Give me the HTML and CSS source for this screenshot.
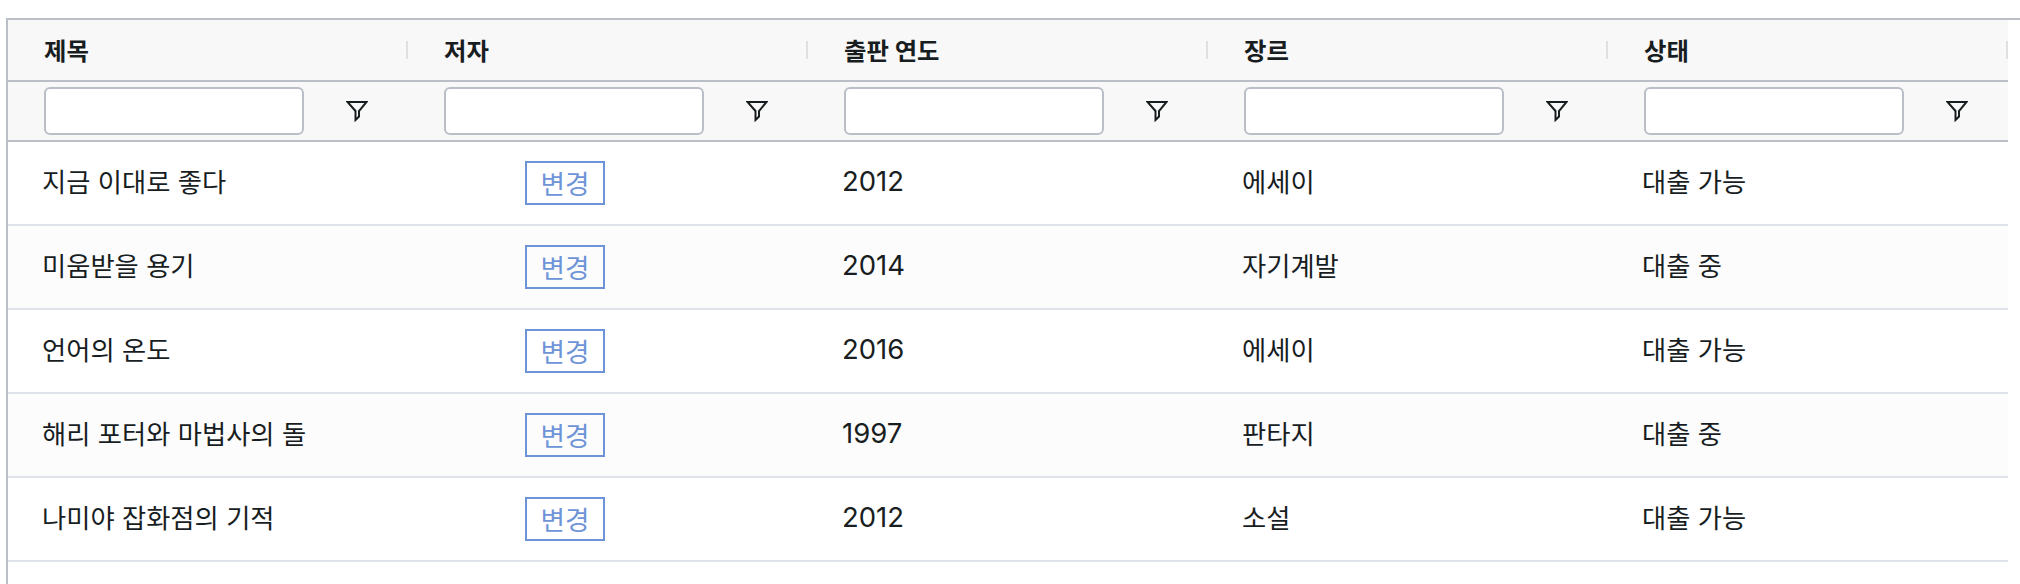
FILE: index.html
```html
<!DOCTYPE html>
<html lang="ko">
<head>
<meta charset="utf-8">
<title>도서 목록</title>
<link rel="stylesheet" href="styles.css">
</head>
<body>
<div class="grid">
  <div class="row head">
    <div class="hcell"><span>제목</span><i class="sep"></i></div>
    <div class="hcell"><span>저자</span><i class="sep"></i></div>
    <div class="hcell"><span>출판 연도</span><i class="sep"></i></div>
    <div class="hcell"><span>장르</span><i class="sep"></i></div>
    <div class="hcell"><span>상태</span><i class="sep"></i></div>
  </div>
  <div class="row filters">
    <div class="fcell"><input class="finput" type="text"><svg class="ficon" viewBox="0 0 22 22"><path d="M1.5 2H20.5L13 11V16.5L9.5 20V11Z"/></svg></div>
    <div class="fcell"><input class="finput" type="text"><svg class="ficon" viewBox="0 0 22 22"><path d="M1.5 2H20.5L13 11V16.5L9.5 20V11Z"/></svg></div>
    <div class="fcell"><input class="finput" type="text"><svg class="ficon" viewBox="0 0 22 22"><path d="M1.5 2H20.5L13 11V16.5L9.5 20V11Z"/></svg></div>
    <div class="fcell"><input class="finput" type="text"><svg class="ficon" viewBox="0 0 22 22"><path d="M1.5 2H20.5L13 11V16.5L9.5 20V11Z"/></svg></div>
    <div class="fcell"><input class="finput" type="text"><svg class="ficon" viewBox="0 0 22 22"><path d="M1.5 2H20.5L13 11V16.5L9.5 20V11Z"/></svg></div>
  </div>
  <div class="row body">
    <div class="cell">지금 이대로 좋다</div><div class="cell mid"><button class="btn">변경</button></div><div class="cell num">2012</div><div class="cell">에세이</div><div class="cell">대출 가능</div>
  </div>
  <div class="row body odd">
    <div class="cell">미움받을 용기</div><div class="cell mid"><button class="btn">변경</button></div><div class="cell num">2014</div><div class="cell">자기계발</div><div class="cell">대출 중</div>
  </div>
  <div class="row body">
    <div class="cell">언어의 온도</div><div class="cell mid"><button class="btn">변경</button></div><div class="cell num">2016</div><div class="cell">에세이</div><div class="cell">대출 가능</div>
  </div>
  <div class="row body odd">
    <div class="cell">해리 포터와 마법사의 돌</div><div class="cell mid"><button class="btn">변경</button></div><div class="cell num">1997</div><div class="cell">판타지</div><div class="cell">대출 중</div>
  </div>
  <div class="row body">
    <div class="cell">나미야 잡화점의 기적</div><div class="cell mid"><button class="btn">변경</button></div><div class="cell num">2012</div><div class="cell">소설</div><div class="cell">대출 가능</div>
  </div>
</div>
</body>
</html>
```
FILE: styles.css
```css
* { box-sizing: border-box; }
html, body { margin: 0; height: 100%; background: #fff; overflow: hidden; }
body {
  padding: 18px 0 0 6px;
  font-family: "Inter", "Noto Sans CJK KR", sans-serif;
  color: #181d1f;
}
.grid {
  height: 100%;
  border-top: 2px solid #babfc7;
  border-left: 2px solid #babfc7;
}
.row { display: grid; grid-template-columns: repeat(5, 400px); width: 2000px; }
.head {
  height: 62px;
  background: #f8f8f8;
  border-bottom: 2px solid #babfc7;
}
.hcell {
  display: flex;
  align-items: center;
  justify-content: space-between;
  padding: 0 0 2px 36px;
  font-size: 24.4px;
  font-weight: 700;
}
.sep { width: 2px; height: 18px; background: #dfe0e1; margin-top: 2px; }
.filters {
  height: 60px;
  background: #f8f8f8;
  border-bottom: 2px solid #babfc7;
}
.fcell {
  display: flex;
  align-items: center;
  padding-left: 36px;
}
.finput {
  width: 260px;
  height: 48px;
  background: #fff;
  border: 2px solid #babfc7;
  border-radius: 6px;
  padding: 0;
}
.ficon {
  width: 22px;
  height: 22px;
  margin-left: 42px;
  fill: none;
  stroke: #181d1f;
  stroke-width: 2;
}
.body {
  height: 84px;
  background: #fff;
  border-bottom: 2px solid #dde2eb;
}
.odd { background: #fcfcfc; }
.cell {
  display: flex;
  align-items: center;
  padding: 0 0 6px 34px;
  font-size: 26.3px;
}
.num { font-size: 27.5px; padding-bottom: 4px; }
.mid { padding: 0 0 0 117px; }
.btn {
  width: 80px;
  height: 44px;
  padding: 0 0 8px;
  background: transparent;
  border: 2px solid #6e94d8;
  color: #6e94d8;
  font: inherit;
  font-size: 26.6px;
}
```
